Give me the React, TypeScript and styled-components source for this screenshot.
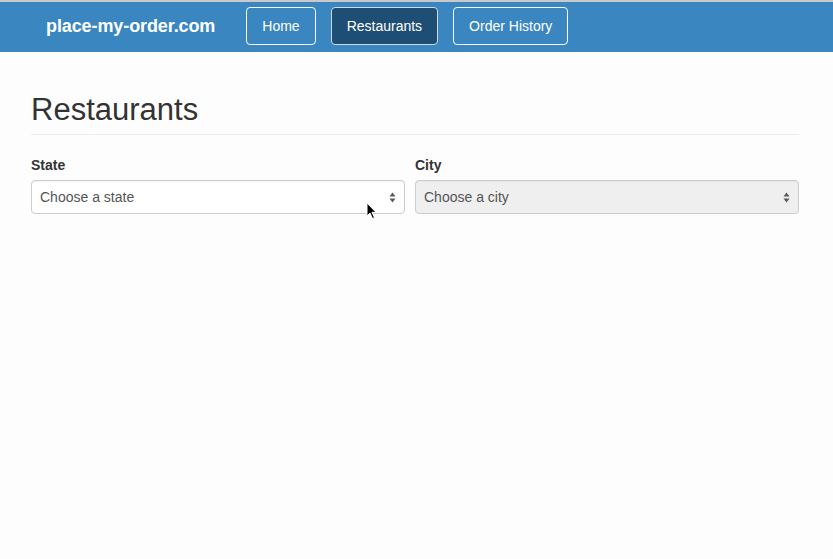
import React from "react";
import styled, { createGlobalStyle } from "styled-components";

const GlobalStyle = createGlobalStyle`
  html, body {
    margin: 0;
    padding: 0;
    background: #fdfdfd;
    font-family: "Liberation Sans", Arial, Helvetica, sans-serif;
    color: #333;
  }
  * { box-sizing: border-box; }
`;

const Page = styled.div`
  position: relative;
  min-height: 559px;
  border-top: 2px solid #c9c9c9;
`;

const NavBar = styled.nav`
  height: 50px;
  background: #3a86c0;
  display: flex;
  align-items: flex-start;
  padding: 5px 0 0 46px;
`;

const Brand = styled.a`
  color: #fff;
  font-size: 18px;
  font-weight: bold;
  line-height: 38px;
  margin-right: 31px;
  text-decoration: none;
  letter-spacing: -0.1px;
`;

const NavList = styled.div`
  display: flex;
  gap: 15px;
`;

const NavButton = styled.a<{ $active?: boolean }>`
  display: flex;
  align-items: center;
  height: 38px;
  padding: 0 15px;
  border: 1px solid ${(p) => (p.$active ? "#cfdbe6" : "#ffffff")};
  border-radius: 4px;
  background: ${(p) => (p.$active ? "#1f4e74" : "transparent")};
  color: #fff;
  font-size: 14px;
  text-decoration: none;
`;

const Main = styled.main`
  padding: 41px 34px 0 31px;
`;

const Title = styled.h1`
  margin: 0;
  font-size: 31px;
  font-weight: normal;
  line-height: 34px;
  color: #333;
  padding-bottom: 7px;
  border-bottom: 1px solid #eeeeee;
`;

const FormRow = styled.div`
  display: grid;
  grid-template-columns: 374px 1fr;
  column-gap: 10px;
  margin-top: 20px;
`;

const Field = styled.div`
  display: flex;
  flex-direction: column;
`;

const Label = styled.label`
  font-size: 14px;
  font-weight: bold;
  line-height: 20px;
  color: #333;
  margin-bottom: 5px;
`;

const SelectBox = styled.div<{ $disabled?: boolean }>`
  position: relative;
  display: flex;
  align-items: center;
  height: 34px;
  padding: 0 8px;
  border: 1px solid #cccccc;
  border-radius: 4px;
  background: ${(p) => (p.$disabled ? "#efefef" : "#ffffff")};
  color: #555;
  font-size: 14px;
  box-shadow: inset 0 1px 1px rgba(0, 0, 0, 0.04);
`;

const SelectText = styled.span`
  flex: 1;
`;

const Arrows = () => (
  <svg width="7" height="11" viewBox="0 0 7 11" aria-hidden="true">
    <path d="M3.5 0.5 L6.5 4.5 L0.5 4.5 Z" fill="#5a5a5a" />
    <path d="M3.5 10.5 L6.5 6.5 L0.5 6.5 Z" fill="#5a5a5a" />
  </svg>
);

const Cursor = styled.svg`
  position: absolute;
  left: 366px;
  top: 200px;
`;

export default function App() {
  return (
    <>
      <GlobalStyle />
      <Page>
        <NavBar>
          <Brand href="#">place-my-order.com</Brand>
          <NavList>
            <NavButton href="#">Home</NavButton>
            <NavButton href="#" $active>
              Restaurants
            </NavButton>
            <NavButton href="#">Order History</NavButton>
          </NavList>
        </NavBar>
        <Main>
          <Title>Restaurants</Title>
          <FormRow>
            <Field>
              <Label>State</Label>
              <SelectBox>
                <SelectText>Choose a state</SelectText>
                <Arrows />
              </SelectBox>
            </Field>
            <Field>
              <Label>City</Label>
              <SelectBox $disabled>
                <SelectText>Choose a city</SelectText>
                <Arrows />
              </SelectBox>
            </Field>
          </FormRow>
        </Main>
        <Cursor width="12" height="18" viewBox="0 0 12 18" aria-hidden="true">
          <path
            d="M1 1 L1 14 L4 11 L6.5 16.5 L8.5 15.6 L6 10.3 L10 10.3 Z"
            fill="#000"
            stroke="#fff"
            strokeWidth="1"
          />
        </Cursor>
      </Page>
    </>
  );
}
